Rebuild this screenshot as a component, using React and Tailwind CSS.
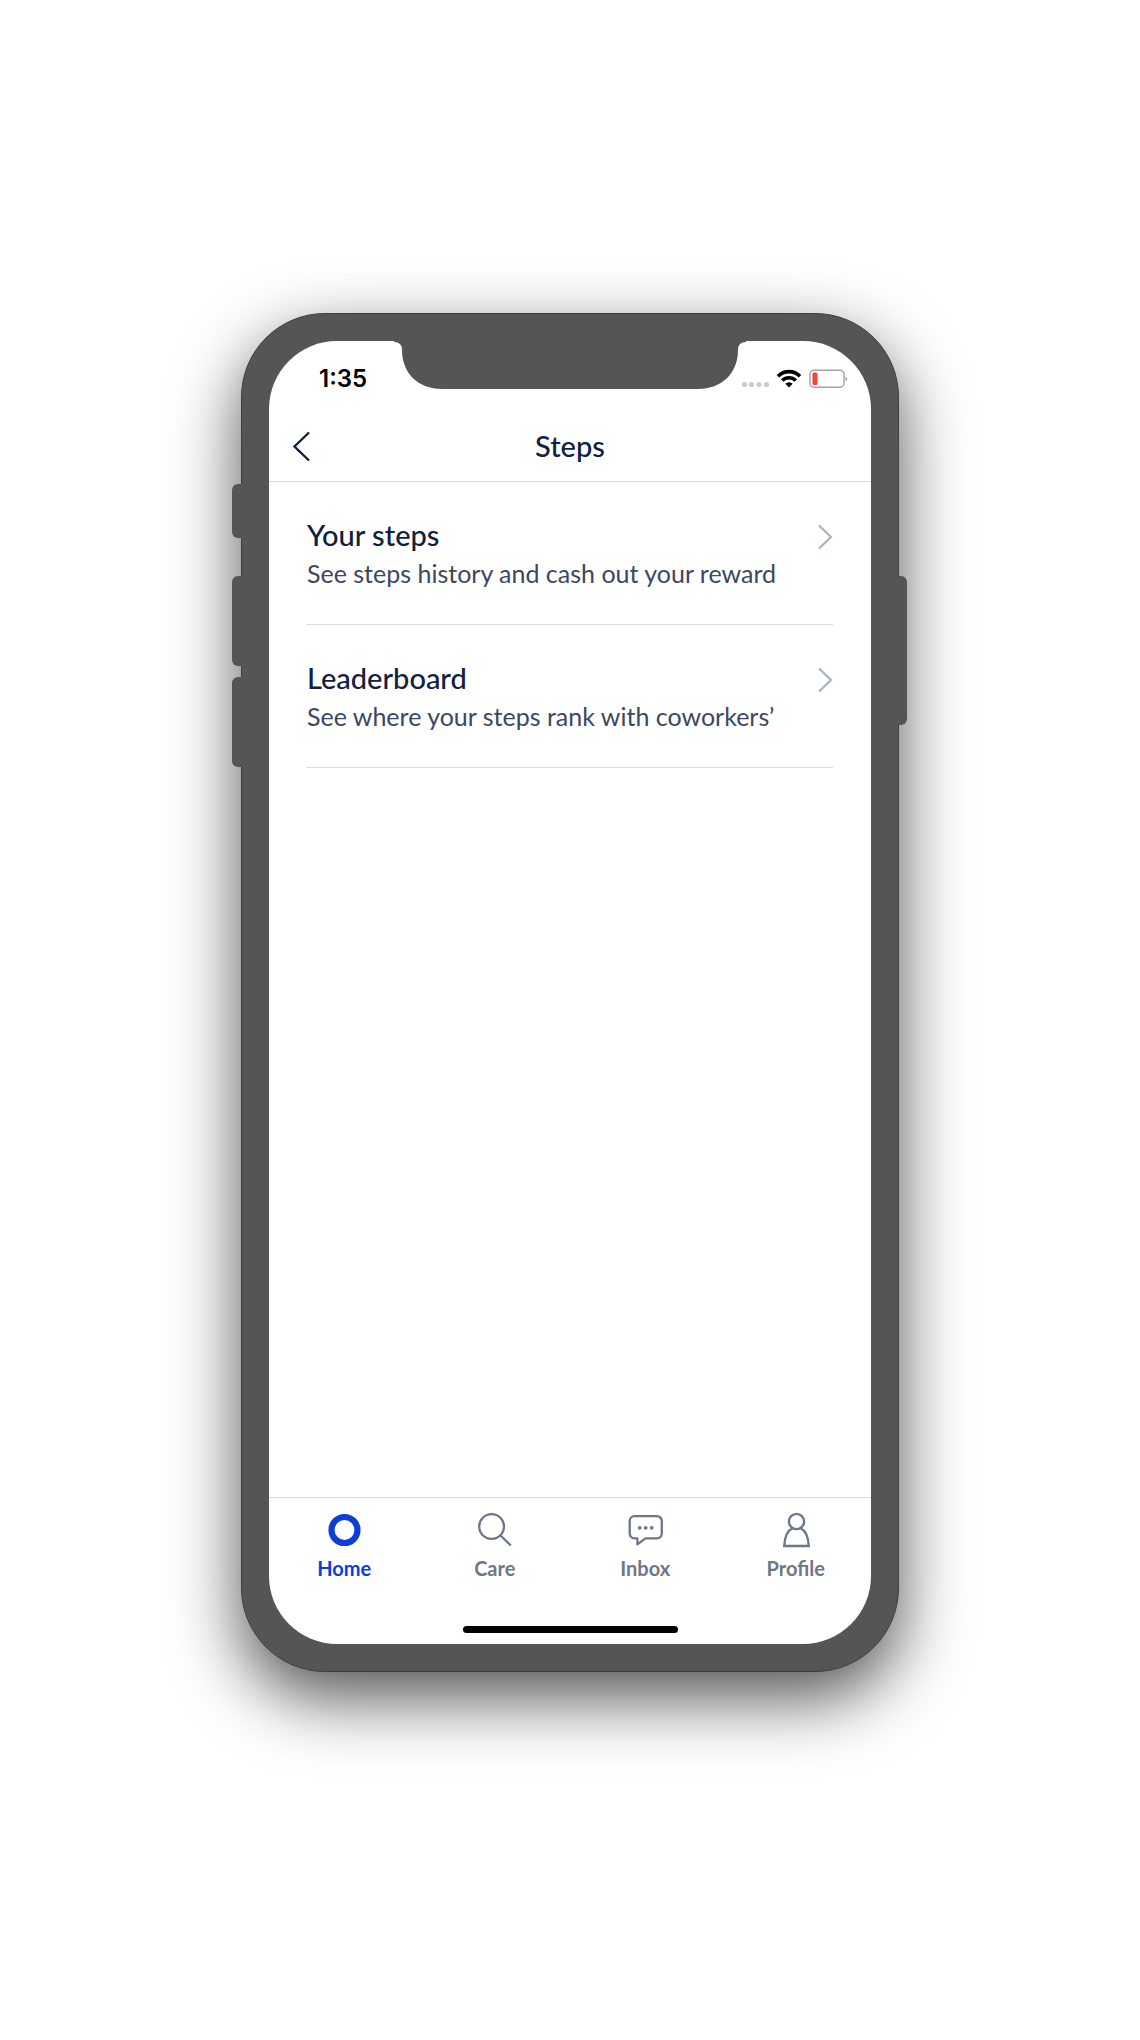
import React from "react";

const rows = [
  { title: "Your steps", text: "See steps history and cash out your reward" },
  { title: "Leaderboard", text: "See where your steps rank with coworkers’" },
];

function HomeIcon() {
  return (
    <svg viewBox="0 0 36 36" className="size-9" fill="none" stroke="currentColor" aria-hidden="true">
      <circle cx="18.5" cy="18" r="13" strokeWidth="6.2" />
    </svg>
  );
}

function CareIcon() {
  return (
    <svg viewBox="0 0 36 36" className="size-9" fill="none" stroke="currentColor" strokeWidth="2.3" aria-hidden="true">
      <circle cx="14.6" cy="14.5" r="12.4" />
      <path d="M23.500 23.500L33.800 33.500" />
    </svg>
  );
}

function InboxIcon() {
  return (
    <svg viewBox="0 0 36 36" className="size-9" fill="none" stroke="currentColor" strokeWidth="2.3" strokeLinejoin="round" aria-hidden="true">
      <path d="M7.500 4.200H30A4.800 4.800 0 0 1 34.800 9V21.600A4.800 4.800 0 0 1 30 26.400H18.400L10.400 32.400V26.400H7.500A4.800 4.800 0 0 1 2.700 21.600V9A4.800 4.800 0 0 1 7.500 4.200Z" />
      <g fill="currentColor" stroke="none">
        <circle cx="12.700" cy="15.800" r="1.900" />
        <circle cx="18.700" cy="15.800" r="1.900" />
        <circle cx="24.700" cy="15.800" r="1.900" />
      </g>
    </svg>
  );
}

function ProfileIcon() {
  return (
    <svg viewBox="0 0 36 36" className="size-9" fill="none" stroke="currentColor" strokeWidth="2.3" aria-hidden="true">
      <circle cx="18.500" cy="9.500" r="7.600" />
      <path d="M14.500 16.200C9 18.500 6.800 25 6.200 34H30.800C30.200 25 28 18.500 22.500 16.200" />
    </svg>
  );
}

const tabs = [
  { label: "Home", Icon: HomeIcon, active: true },
  { label: "Care", Icon: CareIcon },
  { label: "Inbox", Icon: InboxIcon },
  { label: "Profile", Icon: ProfileIcon },
];

function StatusBar() {
  return (
    <div className="flex h-[70px] items-center justify-between pt-[5px] pl-[50px] pr-6">
      <span className="font-['Inter',sans-serif] text-[24px] font-semibold leading-none text-black">1:35</span>
      <svg viewBox="0 0 106 24" className="h-6 w-[106px]" aria-hidden="true">
        <g fill="#cbcbcb">
          <circle cx="3.500" cy="17.500" r="2.600" />
          <circle cx="10.500" cy="17.500" r="2.600" />
          <circle cx="18" cy="17.500" r="2.600" />
          <circle cx="25.500" cy="17.500" r="2.600" />
        </g>
        <g fill="none" stroke="#000" strokeWidth="3.600">
          <path d="M37 9.200A15.500 15.500 0 0 1 59 9.200" />
          <path d="M41.200 13.600A9.500 9.500 0 0 1 54.800 13.600" />
        </g>
        <path d="M44.300 16.800A5.300 5.300 0 0 1 51.700 16.800L48 20.500Z" fill="#000" />
        <rect x="69" y="3.200" width="34" height="17" rx="4" fill="none" stroke="#a3a3a3" strokeWidth="1.400" />
        <rect x="71.500" y="5.500" width="5" height="12.500" rx="1.500" fill="#f04438" />
        <path d="M104.600 9.500Q106 10.200 106 12Q106 13.800 104.600 14.500Z" fill="#8f8f8f" />
      </svg>
    </div>
  );
}

export default function App() {
  return (
    <main className="flex min-h-screen items-start justify-center bg-white px-6 pt-[313px] pb-20 font-['Lato',sans-serif]">
      <div className="relative flex aspect-[658/1359] w-full max-w-[658px] flex-col rounded-[84px] border border-[#3f3f3f] bg-[#555555] p-[27px] shadow-[0_26px_68px_rgba(0,0,0,0.68)]">
        <div className="absolute top-[170px] -left-[10px] h-[54px] w-[10px] rounded-l-[6px] bg-[#555555]" />
        <div className="absolute top-[262px] -left-[10px] h-[90px] w-[10px] rounded-l-[6px] bg-[#555555]" />
        <div className="absolute top-[363px] -left-[10px] h-[90px] w-[10px] rounded-l-[6px] bg-[#555555]" />
        <div className="absolute top-[262px] -right-[9px] h-[149px] w-[9px] rounded-r-[6px] bg-[#555555]" />

        <div className="relative flex flex-1 flex-col overflow-hidden rounded-[68px] bg-white">
          <svg viewBox="0 0 352 48" className="absolute top-0 left-1/2 h-12 w-[352px] -translate-x-1/2" aria-hidden="true">
            <path d="M0 0H352V1Q344 1 344 9C344 32 328 48 304 48H48C24 48 8 32 8 9Q8 1 0 1Z" fill="#555555" />
          </svg>
          <StatusBar />

          <header className="grid h-[71px] grid-cols-3 items-center border-b border-[#d9d9d9] px-5">
            <button type="button" aria-label="Back" className="flex h-12 w-12 items-center text-[#10213f]">
              <svg viewBox="0 0 24 32" className="h-8 w-6" fill="none" stroke="currentColor" strokeWidth="2.400" aria-hidden="true">
                <path d="M20 2.500L5.500 16.500L20 30.500" />
              </svg>
            </button>
            <h1 className="text-center text-[29px] font-medium leading-8 text-[#10213f]">Steps</h1>
          </header>

          <ul className="flex-1 px-[38px]">
            {rows.map((row) => (
              <li key={row.title} className="border-b border-[#d9d9d9]">
                <a href="#" className="flex h-[142px] items-start justify-between pt-[35px]">
                  <span className="flex flex-col">
                    <span className="text-[29px] font-medium leading-9 text-[#10213f]">{row.title}</span>
                    <span className="whitespace-nowrap text-[25px] leading-10 text-[#3c4761]">{row.text}</span>
                  </span>
                  <svg viewBox="0 0 16 26" className="mt-[7px] h-[26px] w-4 shrink-0" fill="none" stroke="#a9b3bf" strokeWidth="2.200" aria-hidden="true">
                    <path d="M2 1.500L14 13L2 24.500" />
                  </svg>
                </a>
              </li>
            ))}
          </ul>

          <nav className="flex h-[147px] flex-col justify-between border-t border-[#d9d9d9] pt-[14px] pb-[11px]">
            <div className="grid grid-cols-4">
              {tabs.map(({ label, Icon, active }) => (
                <button
                  key={label}
                  type="button"
                  className={
                    active
                      ? "flex flex-col items-center gap-2 text-[#0b3fdb]"
                      : "flex flex-col items-center gap-2 text-[#6d7789]"
                  }
                >
                  <Icon />
                  <span className="text-[20px] font-bold leading-6">{label}</span>
                </button>
              ))}
            </div>
            <div className="mx-auto h-[7px] w-[215px] rounded-full bg-black" />
          </nav>
        </div>
      </div>
    </main>
  );
}
